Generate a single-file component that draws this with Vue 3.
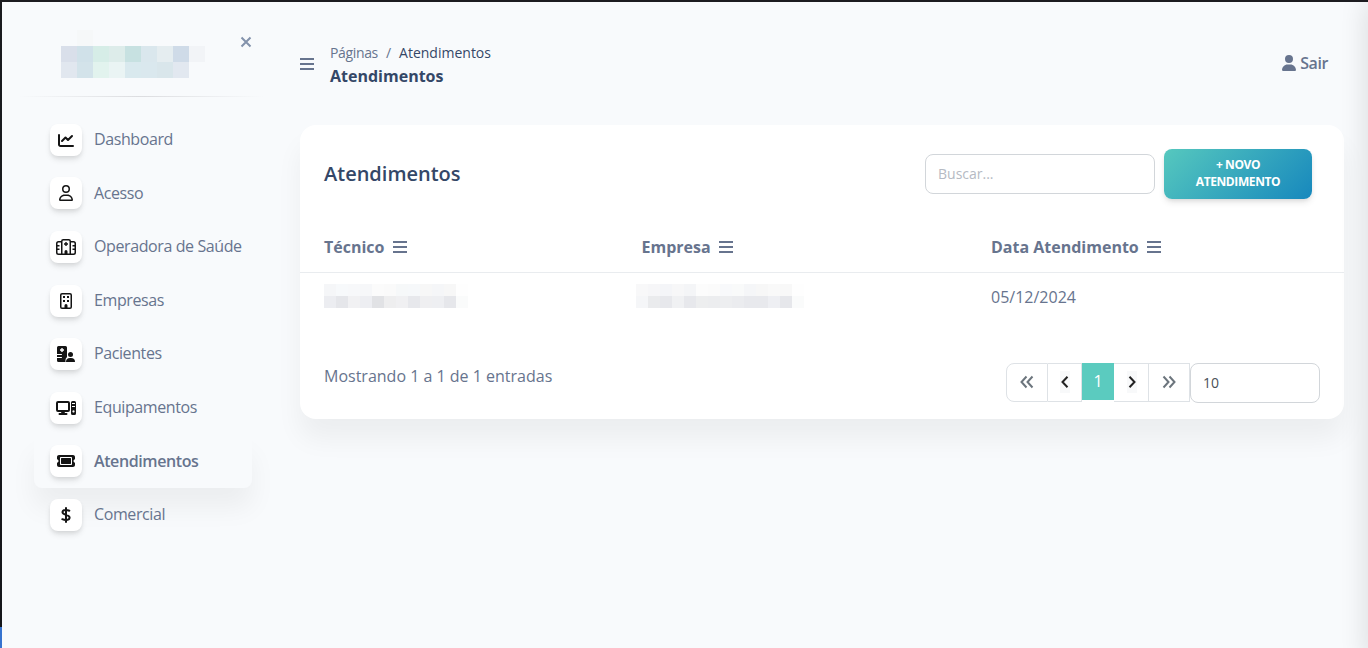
<script setup>
const logoRows = [
  ['', '#f6f8f9', '', '', '', '', '', '', ''],
  ['#d9dfea', '#d0e1e9', '#d6ede7', '#ddecea', '#c7e1e1', '#dae7ed', '#e5edf0', '#cfdbe8', '#f2f4f7'],
  ['#e1e7ef', '#d3e3ea', '#e2f3ee', '#eaf4f4', '#d9e9ee', '#dae8ee', '#d9e6eb', '#e2e8f0', ''],
]
const technician = [
  ['#f5f6f8', '#f7f9fb', '#f7f8fa', '#f6f7f9', '#fbfbfb', '#fafafa', '#f6f8f9', '#f6f8fa', '#f7f7f7', '#f5f6f8', '#f7f7f7', '#fefefe'],
  ['#ecedf1', '#e5e6ea', '#f1f1f3', '#edeef2', '#e1e2e5', '#eeeeef', '#f0f0f2', '#e7e8ec', '#efeff1', '#eeeff2', '#e6e7eb', '#fafbfb'],
]
const company = [
  ['#f8f8f9', '#f6f6f8', '#f4f5f8', '#f7f7f8', '#f4f5f7', '#fcfcfc', '#fbfbfb', '#f8f9fb', '#f9fafa', '#f5f6f8', '#f7f7f7', '#f9f9f9', '#f8f8f8', '#fefefe'],
  ['#f5f6f8', '#eaebed', '#e7e8ec', '#f0f1f3', '#e7e8ec', '#edeeef', '#ecedef', '#edeef0', '#ebecef', '#e8e9ed', '#e8e9ed', '#eeeff3', '#e6e7eb', '#fafbfb'],
]
const items = [
  { label: 'Dashboard', icon: 'chart' },
  { label: 'Acesso', icon: 'user' },
  { label: 'Operadora de Saúde', icon: 'hospital' },
  { label: 'Empresas', icon: 'building' },
  { label: 'Pacientes', icon: 'patients' },
  { label: 'Equipamentos', icon: 'computer' },
  { label: 'Atendimentos', icon: 'ticket', active: true },
  { label: 'Comercial', icon: 'dollar' },
]
const columns = ['Técnico', 'Empresa', 'Data Atendimento']
</script>

<template>
  <div class="window">
    <div class="edge"></div>
    <aside class="sidebar">
      <div class="brand">
        <div class="mosaic logo">
          <div v-for="(row, r) in logoRows" :key="r" class="mrow">
            <i v-for="(c, i) in row" :key="i" :style="{ background: c }"></i>
          </div>
        </div>
        <svg class="close" width="12" height="12" viewBox="0 0 12 12"><path d="M1.5 1.5l9 9M10.5 1.5l-9 9" /></svg>
      </div>
      <div class="rule"></div>
      <nav>
        <a v-for="it in items" :key="it.label" class="item" :class="{ active: it.active }">
          <span class="ibox">
            <svg v-if="it.icon === 'chart'" width="16" height="16" viewBox="0 0 16 16"><path class="thick" stroke-linejoin="round" d="M1 3v9.500A1.500 1.500 0 0 0 2.500 14H15" /><path class="thick" stroke-linejoin="round" d="M4 9l3.500-3.500L10 8l4-4" /></svg>
            <svg v-else-if="it.icon === 'user'" width="14" height="16" viewBox="0 0 448 512"><path d="M304 128a80 80 0 1 0-160 0 80 80 0 1 0 160 0zM96 128a128 128 0 1 1 256 0A128 128 0 1 1 96 128zM49.3 464H398.7c-8.9-63.3-63.3-112-129-112H178.3c-65.7 0-120.1 48.7-129 112zM0 482.3C0 383.8 79.8 304 178.3 304h91.4C368.2 304 448 383.8 448 482.3c0 16.4-13.3 29.7-29.7 29.7H29.7C13.3 512 0 498.7 0 482.3z" /></svg>
            <svg v-else-if="it.icon === 'hospital'" width="20" height="16" viewBox="0 0 20 16">
              <path class="line" d="M6 2.750H2.500A1.750 1.750 0 0 0 .75 4.500v9A1.750 1.750 0 0 0 2.500 15.250h15a1.750 1.750 0 0 0 1.750-1.750v-9a1.750 1.750 0 0 0-1.750-1.750H14M5.750 15V2.250A1.500 1.500 0 0 1 7.250.75h5.500a1.500 1.500 0 0 1 1.500 1.500V15M1 6.750h2.500M1 10.250h2.500M16.500 6.750H19M16.500 10.250H19" />
              <path d="M9.300 3h1.400v1.300H12v1.400h-1.300V7H9.300V5.700H8V4.300h1.300zM8.500 15v-2.500a1.500 1.500 0 0 1 3 0V15z" />
            </svg>
            <svg v-else-if="it.icon === 'building'" width="12" height="16" viewBox="0 0 12 16">
              <rect class="line" x=".75" y=".75" width="10.500" height="14.500" rx="1.300" />
              <path d="M3 3h2v2H3zM7 3h2v2H7zM3 7h2v2H3zM7 7h2v2H7zM4.500 15v-2.500a1.500 1.500 0 0 1 3 0V15z" />
            </svg>
            <svg v-else-if="it.icon === 'patients'" width="18" height="16" viewBox="0 0 18 16">
              <path fill-rule="evenodd" d="M1.500 0H8.500A1.500 1.500 0 0 1 10 1.500V11a5 5 0 0 0-1.600 4c0 .4.100.7.300 1H1.500A1.500 1.500 0 0 1 0 14.500V12h4.500a.5.5 0 0 0 0-1H0V9h4.500a.5.5 0 0 0 0-1H0V1.500A1.500 1.500 0 0 1 1.500 0zM4.300 2v1.300H3v1.400h1.300V6h1.400V4.700H7V3.300H5.700V2z" />
              <circle cx="13.500" cy="8.500" r="2.500" /><path d="M9 16a4 4 0 0 1 4-4h1a4 4 0 0 1 4 4z" />
            </svg>
            <svg v-else-if="it.icon === 'computer'" width="20" height="14" viewBox="0 0 20 14">
              <rect class="thick" x="1" y="1" width="12" height="9" rx="1" />
              <path d="M5.500 10h3l.4 2H10.500a1 1 0 0 1 0 2h-7a1 1 0 0 1 0-2h1.600z" />
              <path fill-rule="evenodd" d="M16.500 0h2A1.500 1.500 0 0 1 20 1.500v11a1.500 1.500 0 0 1-1.500 1.500h-2a1.500 1.500 0 0 1-1.500-1.500v-11A1.500 1.500 0 0 1 16.500 0zM16 2v1h3V2zM16 5v1h3V5zM17.500 9.300a1.100 1.100 0 1 0 .01 0z" />
            </svg>
            <svg v-else-if="it.icon === 'ticket'" width="18" height="16" viewBox="0 0 576 512"><path d="M64 64C28.700 64 0 92.700 0 128v64c0 8.800 7.400 15.700 15.700 18.600C34.500 217.100 48 235 48 256s-13.500 38.900-32.300 45.400C7.400 304.300 0 311.200 0 320v64c0 35.300 28.700 64 64 64H512c35.300 0 64-28.700 64-64V320c0-8.800-7.400-15.700-15.700-18.600C541.500 294.900 528 277 528 256s13.500-38.900 32.300-45.400c8.300-2.900 15.700-9.800 15.700-18.600V128c0-35.300-28.700-64-64-64H64zm64 112l0 160c0 8.800 7.200 16 16 16H432c8.800 0 16-7.200 16-16V176c0-8.800-7.200-16-16-16H144c-8.800 0-16 7.200-16 16zM96 160c0-17.700 14.300-32 32-32H448c17.700 0 32 14.300 32 32V352c0 17.700-14.300 32-32 32H128c-17.700 0-32-14.300-32-32V160z" /></svg>
            <svg v-else width="10" height="16" viewBox="0 0 10 16"><path class="thick" d="M5 1v14M8.300 3.700C6.500 3 1.500 2.300 1.500 5.300 1.500 8.500 8.600 7.200 8.600 10.600 8.600 13.800 3.500 13.200 1.300 12.200" /></svg>
          </span>
          <span class="label">{{ it.label }}</span>
        </a>
      </nav>
    </aside>

    <main>
      <header>
        <svg class="bars" width="14" height="16" viewBox="0 0 14 16"><path d="M0 3h14M0 8h14M0 13h14" /></svg>
        <div class="crumbs">
          <div class="path"><span class="root">Páginas</span><span class="sep">/</span><b>Atendimentos</b></div>
          <h6>Atendimentos</h6>
        </div>
        <a class="exit">
          <svg width="14" height="16" viewBox="0 0 448 512"><path d="M224 256A128 128 0 1 0 224 0a128 128 0 1 0 0 256zm-45.700 48C79.800 304 0 383.800 0 482.300C0 498.700 13.300 512 29.700 512H418.300c16.400 0 29.700-13.300 29.700-29.700C448 383.800 368.200 304 269.700 304H178.300z" /></svg>
          <span>Sair</span>
        </a>
      </header>

      <section class="card">
        <div class="top">
          <h5>Atendimentos</h5>
          <input class="search" placeholder="Buscar..." />
          <button class="new">+ NOVO<br />ATENDIMENTO</button>
        </div>
        <div class="row head">
          <div v-for="c in columns" :key="c" class="cell">
            <span>{{ c }}</span>
            <svg width="14" height="16" viewBox="0 0 14 16"><path d="M0 3h14M0 8h14M0 13h14" /></svg>
          </div>
        </div>
        <div class="row data">
          <div class="mosaic small">
            <div v-for="(row, r) in technician" :key="r" class="mrow"><i v-for="(c, i) in row" :key="i" :style="{ background: c }"></i></div>
          </div>
          <div class="mosaic small company">
            <div v-for="(row, r) in company" :key="r" class="mrow"><i v-for="(c, i) in row" :key="i" :style="{ background: c }"></i></div>
          </div>
          <div class="date">05/12/2024</div>
        </div>
        <footer>
          <div class="showing">Mostrando 1 a 1 de 1 entradas</div>
          <div class="pages">
            <span class="pg wide first"><svg width="14" height="14" viewBox="0 0 14 14"><path d="M6.500 1.500L1.500 7l5 5.500M12.500 1.500L7.500 7l5 5.500" /></svg></span>
            <span class="pg"><em><svg width="10" height="14" viewBox="0 0 10 14"><path d="M7.500 1.800L2.500 7l5 5.200" /></svg></em></span>
            <span class="pg current">1</span>
            <span class="pg next"><em><svg width="10" height="14" viewBox="0 0 10 14"><path d="M2.500 1.800L7.500 7l-5 5.200" /></svg></em></span>
            <span class="pg last"><svg width="14" height="14" viewBox="0 0 14 14"><path d="M1.500 1.500L6.500 7l-5 5.500M7.500 1.500L12.500 7l-5 5.500" /></svg></span>
            <div class="size">10</div>
          </div>
        </footer>
      </section>
    </main>
    <div class="drawer"></div>
  </div>
</template>

<style>
body { background: #f8f9fb; }
</style>
<style scoped>
* { box-sizing: border-box; }
.window { position: relative; display: flex; width: 1368px; height: 648px; overflow: hidden; border-top: 2px solid #1c1c20; background: #f8fafc; color: #67748e; font: 16px/24px "Open Sans", sans-serif; }
.edge { width: 2px; background: linear-gradient(#1a1b1f 0, #15161a 625px, #3673cf 625px); }
svg { display: block; flex: none; }
.sidebar { width: 266px; flex: none; }
.brand { display: flex; height: 94px; padding: 28px 16px 0 59px; }
.mrow { display: flex; }
.mosaic i { display: block; width: 16px; height: 16px; }
.small i { width: 12px; height: 12px; }
.close { margin: 6px 0 0 35px; fill: none; stroke: #8392ab; stroke-width: 2; }
.rule { height: 1px; margin: 0 5px 0 16px; background: linear-gradient(90deg, transparent, #dcdde0, transparent); }
nav { margin: 16.120px 16px 0 32px; }
.item { display: flex; align-items: center; height: 53.550px; padding: 0 16px; border-radius: 8px; white-space: nowrap; letter-spacing: -.4px; }
.ibox { display: flex; align-items: center; justify-content: center; flex: none; width: 32px; height: 32px; margin-right: 12px; border-radius: 8px; background: #fff; box-shadow: 0 4px 6px -1px rgba(20, 20, 20, .12), 0 2px 4px -1px rgba(20, 20, 20, .07); fill: #141414; }
.line { fill: none; stroke: #141414; stroke-width: 1.5; }
.thick { fill: none; stroke: #141414; stroke-width: 2; stroke-linecap: round; }
.label { position: relative; top: -.63px; }
.active { background: #f8fafc; box-shadow: 0 20px 27px 0 rgba(0, 0, 0, .05); font-weight: 600; }
main { width: 1100px; padding: 0 24px 0 32px; }
header { display: flex; align-items: flex-start; height: 123px; padding-top: 39px; }
.bars { margin-top: 15px; }
.bars path, .cell svg path { stroke: #67748e; stroke-width: 2; fill: none; }
.crumbs { margin-left: 16px; }
.path { display: flex; font-size: 14px; line-height: 24px; }
.path b { font-weight: 400; color: #344767; }
.root { letter-spacing: -.35px; }
.sep { padding: 0 8px; }
h6 { margin: 0; color: #344767; font-size: 16px; line-height: 22px; font-weight: 700; }
.exit { display: flex; align-items: center; gap: 4px; margin: 10px 16px 0 auto; font-weight: 600; letter-spacing: -.4px; fill: #67748e; }
.card { height: 294px; border-radius: 16px; background: #fff; box-shadow: 0 20px 27px 0 rgba(0, 0, 0, .05); }
.top { display: flex; align-items: center; height: 98px; padding: 0 32px 0 24px; }
h5 { margin: 0 auto 0 0; font-size: 20px; line-height: 28px; font-weight: 600; color: #344767; }
.search { width: 230px; height: 40px; margin-right: 9px; padding: 0 12px 2px; border: 1px solid #d2d6da; border-radius: 8px; outline: 0; background: #fff; color: #495057; font: 14px "Open Sans", sans-serif; }
.search::placeholder { color: #b5bac3; opacity: 1; }
.new { width: 148px; height: 50px; padding: 0 0 3px; border: 0; border-radius: 8px; background: linear-gradient(135deg, #56c8be, #1788bd); box-shadow: 0 4px 7px -1px rgba(0, 0, 0, .11), 0 2px 4px -1px rgba(0, 0, 0, .07); color: #fff; font: 700 12px/17px "Open Sans", sans-serif; letter-spacing: -.4px; }
.row { display: grid; grid-template-columns: 317.500px 349.500px 1fr; padding-left: 24px; }
.head { height: 50px; align-items: center; padding-bottom: 2px; border-bottom: 1px solid #e9ecef; font-weight: 700; }
.cell { display: flex; align-items: center; gap: 8.300px; }
.data { height: 90px; align-items: start; padding-top: 11px; }
.company { margin-left: -5.500px; }
.date { margin-top: 1px; }
footer { display: flex; justify-content: space-between; padding: 0 24px; }
.showing { margin-top: 1px; }
.pages { display: flex; }
.pg { display: flex; align-items: center; justify-content: center; width: 34px; height: 39px; padding-bottom: 1px; border: 1px solid #dee2e6; border-left: 0; }
.wide { width: 42px; }
.next { width: 35px; padding-left: 1px; }
.last { width: 41px; }
.first { border-left: 1px solid #dee2e6; border-radius: 8px 0 0 8px; }
.pg path { fill: none; stroke: #6c757d; stroke-width: 2; }
.pg em { display: flex; align-items: center; width: 10px; height: 22px; background: #f8f9fa; }
.pg em path { stroke: #222; }
.current { width: 32px; height: 37px; border: 0; background: #5bcbbf; color: #fff; }
.size { width: 130px; height: 40px; padding-left: 12px; border: 1px solid #d2d6da; border-radius: 8px; color: #495057; font-size: 14px; line-height: 38px; }
.drawer { position: absolute; top: 0; right: -20px; width: 20px; height: 660px; box-shadow: 0 0 28px rgba(0, 0, 0, .15); }
</style>
